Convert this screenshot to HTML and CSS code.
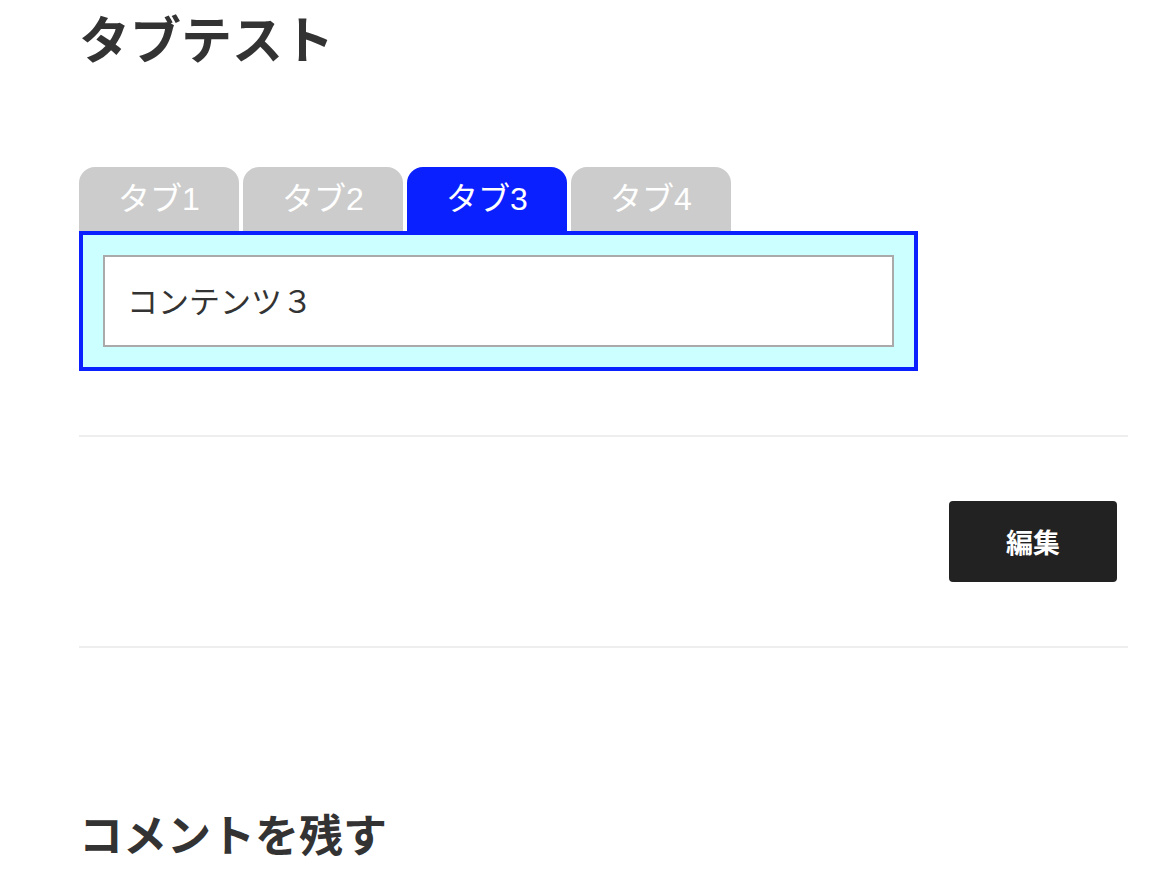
FILE: index.html
```html
<!DOCTYPE html>
<html lang="ja">
<head>
<meta charset="utf-8">
<title>タブテスト</title>
<link rel="stylesheet" href="styles.css">
</head>
<body>
<main class="page">
  <h1 class="title">タブテスト</h1>
  <div class="tabs">
    <div class="tab-list">
      <div class="tab">タブ1</div>
      <div class="tab">タブ2</div>
      <div class="tab active">タブ3</div>
      <div class="tab">タブ4</div>
    </div>
    <div class="tab-panel">
      <div class="tab-content">コンテンツ３</div>
    </div>
  </div>
  <hr class="rule">
  <div class="actions">
    <button class="edit-btn" type="button">編集</button>
  </div>
  <hr class="rule">
  <h2 class="comment-title">コメントを残す</h2>
</main>
</body>
</html>
```

FILE: styles.css
```css
html, body {
  margin: 0;
  padding: 0;
  background: #ffffff;
}

body {
  font-family: "Noto Sans CJK JP", "Noto Sans", "Liberation Sans", sans-serif;
  color: #333333;
}

.page {
  width: 1049px;
  padding-left: 79px;
}

.title {
  margin: 0;
  padding-top: 2px;
  font-size: 51px;
  line-height: 70px;
  font-weight: 700;
  color: #333333;
}

.tabs {
  margin-top: 95px;
}

.tab-list {
  display: flex;
  gap: 4px;
}

.tab {
  width: 160px;
  height: 64px;
  border-radius: 16px 16px 0 0;
  background: #cccccc;
  color: #ffffff;
  font-size: 32px;
  line-height: 64px;
  text-align: center;
  font-family: "Liberation Sans", "Noto Sans CJK JP", sans-serif;
}

.tab.active {
  background: #0b20ff;
}

.tab-panel {
  width: 791px;
  padding: 20px;
  border: 4px solid #0b20ff;
  background: #ccffff;
}

.tab-content {
  height: 84px;
  border: 2px solid #aaaaaa;
  background: #ffffff;
  padding: 0 22px 4px;
  display: flex;
  align-items: center;
  font-size: 31px;
  color: #333333;
}

.rule {
  margin: 64px 0 0;
  border: 0;
  height: 2px;
  background: #eeeeee;
}

.actions {
  display: flex;
  justify-content: flex-end;
  padding: 64px 11px 64px 0;
}

.actions + .rule {
  margin-top: 0;
}

.edit-btn {
  width: 168px;
  height: 81px;
  border: 0;
  border-radius: 4px;
  background: #222222;
  color: #ffffff;
  font-family: "Noto Sans CJK JP", sans-serif;
  font-size: 27px;
  font-weight: 700;
  padding: 0;
}

.comment-title {
  margin: 155px 0 0;
  font-size: 44px;
  line-height: 60px;
  font-weight: 700;
  color: #333333;
}
```
